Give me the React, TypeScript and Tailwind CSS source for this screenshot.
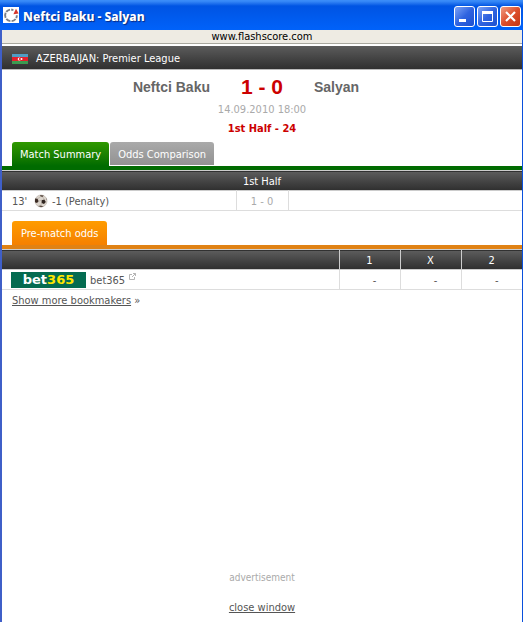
import type { ReactNode } from "react";

interface Odds {
  bookmaker: string;
  values: string[];
}

const ODDS: Odds[] = [{ bookmaker: "bet365", values: ["-", "-", "-"] }];

const HEAD_GRADIENT = "bg-linear-to-b from-[#5c5c5c] to-[#303030]";

function LogoIcon() {
  return (
    <svg className="w-4 h-4 shrink-0" viewBox="0 0 16 16" aria-hidden="true">
      <rect width="16" height="16" fill="#fff" />
      <g fill="none" stroke="#7b7f86" strokeWidth="1.9">
        <path d="M7 2.6A5.8 5.8 0 0 0 3.2 4.9" />
        <path d="M2.7 5.8A5.8 5.8 0 0 0 2.6 10.9" />
        <path d="M3.3 11.9A5.8 5.8 0 0 0 7.4 14.1" />
        <path d="M8.6 14.1A5.8 5.8 0 0 0 12.6 12" />
        <path d="M13.2 11.1A5.8 5.8 0 0 0 13.8 8.2" />
        <path d="M8.2 2.5L10.4 3.1" />
      </g>
      <path d="M10.4 7.2L13 1.8L15.6 6.6Z" fill="#d5352a" />
    </svg>
  );
}

function FlagIcon() {
  return (
    <svg className="w-4 h-3 shrink-0" viewBox="0 0 16 12" aria-hidden="true">
      <rect y="1" width="16" height="4" fill="#4f9dc4" />
      <rect y="4" width="16" height="4" fill="#e4202c" />
      <rect y="8" width="16" height="3" fill="#3c9b50" />
      <circle cx="7.3" cy="6" r="1.6" fill="#fff" />
      <circle cx="7.9" cy="6" r="1.1" fill="#e4202c" />
      <circle cx="9.6" cy="6" r="0.9" fill="#fff" />
    </svg>
  );
}

function BallIcon() {
  return (
    <svg className="w-3.5 h-3.5 shrink-0" viewBox="0 0 14 14" aria-label="Goal" role="img">
      <circle cx="7" cy="7" r="6" fill="#dcd5cd" stroke="#b5aca4" strokeWidth="0.6" />
      <path d="M1.1 4.6L3.6 4.8L4.6 7.2L3 9L1 8.2Z" fill="#3a2b24" />
      <path d="M7.6 6.2L10.4 5.6L11.8 8L10 10L7.6 9Z" fill="#2f2520" />
      <path d="M6 1.1L9.8 1.6L8.6 3L6.6 2.6Z" fill="#5a4b42" />
      <path d="M4 12L6.8 11.4L9.6 12.5L7 13.2Z" fill="#5a4b42" />
      <path d="M12 3.4L13 6L12.4 5.6Z" fill="#4a3b32" />
      <path d="M4.6 7.2L7.6 6.2M8.6 3L10.4 5.6M6.8 11.4L7.6 9M3.6 4.8L6.6 2.6" stroke="#a79c92" strokeWidth="0.5" />
    </svg>
  );
}

function ExternalIcon() {
  return (
    <svg className="w-[7px] h-[7px] mb-2" viewBox="0 0 7 7" fill="none" stroke="#b5b5b5" aria-hidden="true">
      <path d="M3 1.5H0.5V6.5H5.5V4M4 0.5H6.5V3M6.5 0.5L3 4" />
    </svg>
  );
}

function WindowButton({ label, close, children }: { label: string; close?: boolean; children: ReactNode }) {
  return (
    <button
      aria-label={label}
      className={`w-[21px] h-[21px] rounded-[3px] border border-white ${
        close
          ? "bg-linear-to-br from-[#ee9a80] via-[#dd4e2b] to-[#c53513]"
          : "bg-linear-to-br from-[#7da2f5] via-[#2f63e0] to-[#1c50cf]"
      }`}
    >
      <svg className="w-[19px] h-[19px]" viewBox="0 0 19 19" fill="none" stroke="#fff">
        {children}
      </svg>
    </button>
  );
}

function TitleBar() {
  return (
    <header className="flex items-center h-[30px] pl-[3px] pr-0.5 bg-linear-to-b from-[#3a8cf8] from-3% via-[#0054e3] via-20% to-[#0062fa]">
      <LogoIcon />
      <h1 className="flex-1 pl-1 pt-1 font-['Noto_Sans',sans-serif] font-extrabold text-[12px] leading-4 text-white [text-shadow:1px_1px_1px_#0a2a80]">
        Neftci Baku - Salyan
      </h1>
      <div className="flex gap-0.5 pt-0.5">
        <WindowButton label="Minimize">
          <path d="M4 13.5H11" strokeWidth="3" />
        </WindowButton>
        <WindowButton label="Maximize">
          <path d="M4.5 5V14.5H14.5V5" />
          <path d="M4 5.5H15" strokeWidth="3" />
        </WindowButton>
        <WindowButton label="Close" close>
          <path d="M5 5L14 14M14 5L5 14" strokeWidth="2.2" />
        </WindowButton>
      </div>
    </header>
  );
}

function MatchHeader() {
  return (
    <section className="pt-1.5 text-center">
      <div className="grid grid-cols-[1fr_104px_1fr] items-center leading-[22px] font-['Liberation_Sans',sans-serif] font-bold text-[14px] text-[#666]">
        <h2 className="text-right">Neftci Baku</h2>
        <span className="text-[21px] text-[#c00]">1 - 0</span>
        <h2 className="text-left">Salyan</h2>
      </div>
      <p className="pt-1 leading-4 text-[#aaa]">14.09.2010 18:00</p>
      <p className="pt-[3px] leading-4 font-bold text-[#c00]">1st Half - 24</p>
    </section>
  );
}

export default function App() {
  return (
    <div className="flex flex-col min-h-screen bg-[#0a50dc] font-['DejaVu_Sans_Condensed','DejaVu_Sans',sans-serif] text-[11px] leading-4 text-[#555]">
      <TitleBar />
      <div className="flex-1 flex flex-col bg-white border-l-2 border-r border-l-[#3f5fc8] border-r-[#0a50dc]">
        <div className="h-3.5 leading-[14px] text-center text-black bg-[#eeebe3] border-b border-[#a9a89f]">
          www.flashscore.com
        </div>
        <div className={`mt-0.5 flex items-center gap-2 h-6 px-2.5 pt-0.5 text-white border-b border-[#bbb] ${HEAD_GRADIENT}`}>
          <FlagIcon />
          <span>AZERBAIJAN: Premier League</span>
        </div>

        <MatchHeader />

        <nav className="flex gap-px mt-[5px] px-2.5 border-b-4 border-[#006b00]">
          <button className="h-6 px-2 pt-0.5 rounded-t-[3px] bg-linear-to-b from-[#2f9900] to-[#006b00] text-white">
            Match Summary
          </button>
          <button className="h-[23px] px-2 pt-0.5 rounded-t-[3px] bg-linear-to-b from-[#aaa] to-[#929292] text-white">
            Odds Comparison
          </button>
        </nav>
        <table className="w-full table-fixed border-collapse">
          <colgroup>
            <col className="w-[45%]" />
            <col className="w-[10%]" />
            <col className="w-[45%]" />
          </colgroup>
          <thead>
            <tr className={`h-5 text-white border-y border-[#ccc] ${HEAD_GRADIENT}`}>
              <th colSpan={3} className="p-0 pt-0.5 font-normal">1st Half</th>
            </tr>
          </thead>
          <tbody>
            <tr className="h-5 border-b border-[#ddd]">
              <td className="p-0 pl-2.5">
                <div className="flex items-center">
                  <span className="w-[22px] pt-0.5">13'</span>
                  <BallIcon />
                  <span className="pl-1 pt-0.5">-1 (Penalty)</span>
                </div>
              </td>
              <td className="p-0 pt-0.5 text-center text-[#aaa] border-x border-[#ddd]">1 - 0</td>
              <td />
            </tr>
          </tbody>
        </table>

        <nav className="flex mt-2.5 px-2.5 border-b-4 border-[#e08214]">
          <button className="h-6 px-[9px] pt-0.5 rounded-t-[3px] bg-linear-to-b from-[#ff9c00] to-[#f58000] text-white">
            Pre-match odds
          </button>
        </nav>
        <table className="w-full table-fixed border-collapse">
          <thead>
            <tr className={`h-5 text-white border-y border-[#ccc] ${HEAD_GRADIENT}`}>
              <th className="p-0" aria-label="Bookmaker" />
              <th className="w-[61px] p-0 pt-0.5 font-normal border-l border-[#ccc]">1</th>
              <th className="w-[61px] p-0 pt-0.5 font-normal border-l border-[#ccc]">X</th>
              <th className="w-[61px] p-0 pt-0.5 font-normal border-l border-[#ccc]">2</th>
            </tr>
          </thead>
          <tbody>
            {ODDS.map((row) => (
              <tr key={row.bookmaker} className="h-5 border-b border-[#ddd]">
                <td className="p-0 pl-[9px]">
                  <div className="flex items-center gap-1">
                    <span className="w-[75px] h-4 leading-4 text-center bg-[#046b50] font-['DejaVu_Sans',sans-serif] font-bold text-[13px] text-white">
                      bet<span className="text-[#ffe600]">365</span>
                    </span>
                    <a href="#bet365" className="flex items-center gap-1 pt-0.5">
                      {row.bookmaker}
                      <ExternalIcon />
                    </a>
                  </div>
                </td>
                {row.values.map((value, i) => (
                  <td key={i} className="p-0 pl-2.5 pt-0.5 text-center border-l border-[#ddd]">{value}</td>
                ))}
              </tr>
            ))}
          </tbody>
        </table>
        <p className="px-2.5 pt-[3px]">
          <a href="#bookmakers" className="underline">Show more bookmakers</a> »
        </p>

        <footer className="mt-auto pb-1.5 text-center">
          <p className="text-[10px] text-[#aaa]">advertisement</p>
          <a href="#close" className="block pt-3.5 underline">close window</a>
        </footer>
      </div>
    </div>
  );
}
